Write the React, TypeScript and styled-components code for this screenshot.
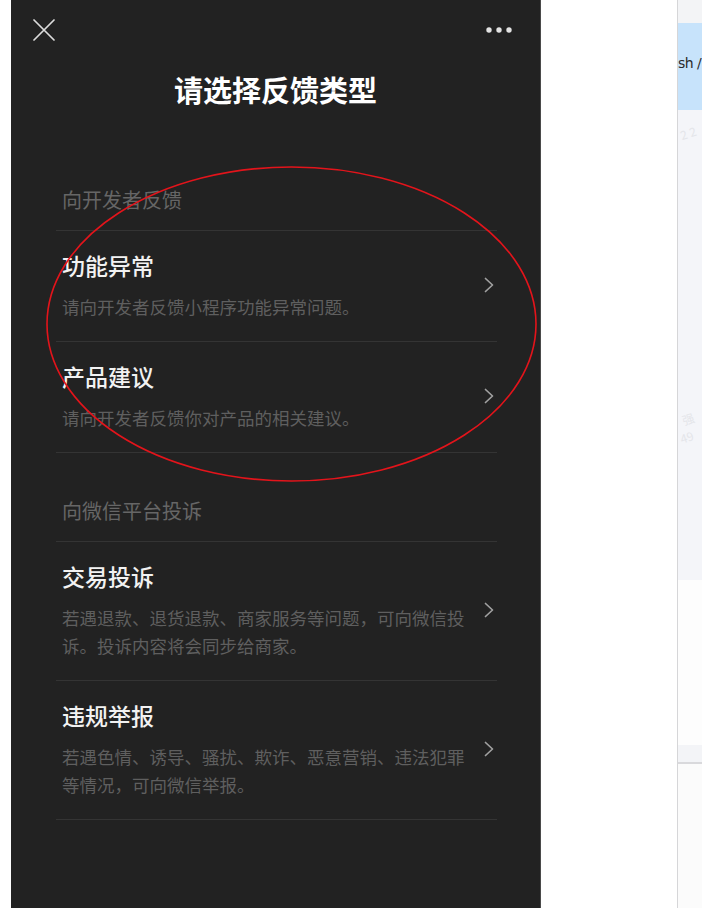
import React from "react";
import styled, { createGlobalStyle } from "styled-components";

const GlobalStyle = createGlobalStyle`
  html, body { margin: 0; padding: 0; background: #ffffff; }
  body {
    font-family: "Noto Sans CJK SC", "Noto Sans", "Liberation Sans", sans-serif;
    -webkit-font-smoothing: antialiased;
  }
  * { box-sizing: border-box; }
`;

const Page = styled.div`
  position: relative;
  display: flex;
  height: 908px;
  overflow: hidden;
  background: #ffffff;
`;

const Gutter = styled.div<{ $w: number }>`
  flex: none;
  width: ${(p) => p.$w}px;
  background: #ffffff;
`;

const Panel = styled.div`
  flex: none;
  width: 530px;
  background: #222222;
  border-right: 1px solid #4a4a4a;
  display: flex;
  flex-direction: column;
`;

const NavBar = styled.div`
  height: 60px;
  display: flex;
  align-items: center;
  justify-content: space-between;
  padding: 0 28px 0 22px;
`;

const IconButton = styled.div`
  display: flex;
  align-items: center;
  justify-content: center;
`;

const Title = styled.h1`
  margin: 9px 0 33px;
  text-align: center;
  font-size: 29px;
  line-height: 40px;
  font-weight: 700;
  color: #ffffff;
`;

const List = styled.div`
  margin: 0 43px 0 45px;
`;

const Section = styled.section``;

const SectionHeader = styled.div`
  padding: 44px 6px 16px;
  font-size: 20px;
  line-height: 28px;
  color: #666666;
  border-bottom: 1px solid #343434;
`;

const Item = styled.div`
  display: flex;
  align-items: center;
  padding: 18px 3px 20px 6px;
  border-bottom: 1px solid #343434;
`;

const ItemBody = styled.div`
  width: 410px;
  display: flex;
  flex-direction: column;
  gap: 12px;
`;

const ItemTitle = styled.div`
  font-size: 23px;
  line-height: 32px;
  font-weight: 500;
  color: #f2f2f2;
`;

const ItemDesc = styled.div`
  font-size: 17.5px;
  line-height: 28px;
  color: #5f5f5f;
`;

const Chevron = styled.svg`
  flex: none;
  margin-left: auto;
  display: block;
`;

const RightPane = styled.div`
  position: relative;
  flex: 1;
  border-left: 1px solid #d6d6d8;
  display: flex;
  flex-direction: column;
  overflow: hidden;
`;

const Band = styled.div<{ $h?: number; $bg: string }>`
  position: relative;
  flex: ${(p) => (p.$h ? "none" : "1")};
  height: ${(p) => (p.$h ? `${p.$h}px` : "auto")};
  background: ${(p) => p.$bg};
`;

const BlueBar = styled(Band)`
  display: flex;
  align-items: center;
  padding-bottom: 7px;
  white-space: nowrap;
  font-family: "DejaVu Sans", "Liberation Sans", sans-serif;
  font-size: 14px;
  letter-spacing: -0.5px;
  color: #2a2a2a;
`;

const FooterStrip = styled(Band)`
  border-bottom: 2px solid #d9d9dc;
`;

const Watermark = styled.span<{ $top: number; $left: number }>`
  position: absolute;
  top: ${(p) => p.$top}px;
  left: ${(p) => p.$left}px;
  font-size: 12px;
  color: #e4e5ea;
  white-space: nowrap;
  transform: rotate(-18deg);
`;

const Annotation = styled.svg`
  position: absolute;
  left: 0;
  top: 0;
  pointer-events: none;
`;

const CloseIcon = () => (
  <svg width="22" height="22" viewBox="0 0 22 22">
    <path d="M1 1 L21 21 M21 1 L1 21" stroke="#dcdcdc" strokeWidth="1.7" strokeLinecap="round" />
  </svg>
);

const MoreIcon = () => (
  <svg width="26" height="8" viewBox="0 0 26 8">
    <circle cx="3" cy="4" r="2.7" fill="#e2e2e2" />
    <circle cx="13" cy="4" r="2.7" fill="#e2e2e2" />
    <circle cx="23" cy="4" r="2.7" fill="#e2e2e2" />
  </svg>
);

const Arrow = () => (
  <Chevron width="10" height="16" viewBox="0 0 10 16">
    <path d="M1.5 1.5 L8.5 8 L1.5 14.5" fill="none" stroke="#a0a0a0" strokeWidth="1.7" strokeLinecap="round" strokeLinejoin="round" />
  </Chevron>
);

type Entry = { title: string; desc: string };
type Group = { header: string; items: Entry[] };

const groups: Group[] = [
  {
    header: "向开发者反馈",
    items: [
      { title: "功能异常", desc: "请向开发者反馈小程序功能异常问题。" },
      { title: "产品建议", desc: "请向开发者反馈你对产品的相关建议。" },
    ],
  },
  {
    header: "向微信平台投诉",
    items: [
      { title: "交易投诉", desc: "若遇退款、退货退款、商家服务等问题，可向微信投诉。投诉内容将会同步给商家。" },
      { title: "违规举报", desc: "若遇色情、诱导、骚扰、欺诈、恶意营销、违法犯罪等情况，可向微信举报。" },
    ],
  },
];

export default function App() {
  return (
    <>
      <GlobalStyle />
      <Page>
        <Gutter $w={11} />
        <Panel>
          <NavBar>
            <IconButton>
              <CloseIcon />
            </IconButton>
            <IconButton>
              <MoreIcon />
            </IconButton>
          </NavBar>
          <Title>请选择反馈类型</Title>
          <List>
            {groups.map((g) => (
              <Section key={g.header}>
                <SectionHeader>{g.header}</SectionHeader>
                {g.items.map((it) => (
                  <Item key={it.title}>
                    <ItemBody>
                      <ItemTitle>{it.title}</ItemTitle>
                      <ItemDesc>{it.desc}</ItemDesc>
                    </ItemBody>
                    <Arrow />
                  </Item>
                ))}
              </Section>
            ))}
          </List>
        </Panel>
        <Gutter $w={136} />
        <RightPane>
          <Band $h={23} $bg="#f3f4f6" />
          <BlueBar $h={87} $bg="#c7e3fb">sh /</BlueBar>
          <Band $h={470} $bg="#f4f5f9">
            <Watermark $top={14} $left={2}>2 2</Watermark>
            <Watermark $top={300} $left={4}>强</Watermark>
            <Watermark $top={318} $left={2}>49</Watermark>
          </Band>
          <Band $h={165} $bg="#fdfdfd" />
          <FooterStrip $h={19} $bg="#f3f4f7" />
          <Band $bg="#fbfbfb" />
        </RightPane>
        <Annotation width="702" height="908" viewBox="0 0 702 908">
          <ellipse cx="291.5" cy="324" rx="244.5" ry="157" fill="none" stroke="#e3141b" strokeWidth="1.6" />
        </Annotation>
      </Page>
    </>
  );
}
